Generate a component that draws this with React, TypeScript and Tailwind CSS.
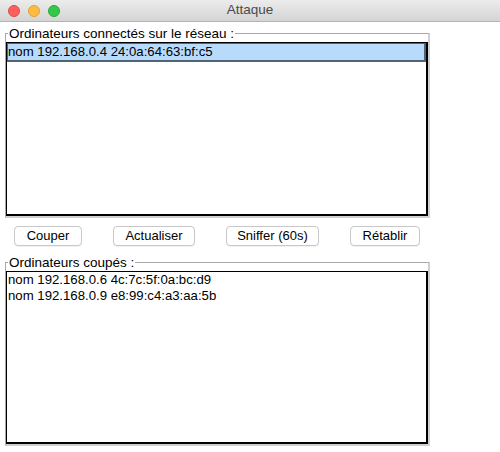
import React from "react";

const connected = ["nom 192.168.0.4 24:0a:64:63:bf:c5"];
const cut = ["nom 192.168.0.6 4c:7c:5f:0a:bc:d9", "nom 192.168.0.9 e8:99:c4:a3:aa:5b"];

const buttons = [
  { label: "Couper", w: "w-[68px]" },
  { label: "Actualiser", w: "w-[82px]" },
  { label: "Sniffer (60s)", w: "w-[93px]" },
  { label: "Rétablir", w: "w-[70px]" },
];

const TitleBar = () => (
  <div className="relative h-[22px] bg-gradient-to-b from-[#ececec] to-[#d4d4d4] border-b border-[#b4b4b4] flex items-center">
    <div className="flex items-center gap-[8px] pl-[8px]">
      <span className="w-[12px] h-[12px] rounded-full bg-[#fc605c] border border-[#de4b45]" />
      <span className="w-[12px] h-[12px] rounded-full bg-[#fdbc40] border border-[#dea236]" />
      <span className="w-[12px] h-[12px] rounded-full bg-[#34c84a] border border-[#27aa35]" />
    </div>
    <div className="absolute inset-0 flex items-center justify-center text-[13.5px] text-[#4a4a4a]">
      Attaque
    </div>
  </div>
);

const Group: React.FC<{ title: string; rows: string[]; height: string; selected?: number }> = ({
  title,
  rows,
  height,
  selected,
}) => (
  <fieldset className="ml-[5px] w-[425px] border-l border-t border-r-2 border-b-2 border-l-[#a9a9a9] border-t-[#a9a9a9] border-r-[#d0d0d0] border-b-[#d0d0d0] p-0 m-0">
    <legend className="ml-[2px] px-[1px] text-[13.5px] leading-[15px] text-black">{title}</legend>
    <div className={`${height} mt-[1px] bg-white border border-black border-r-2 border-b-2`}>
      {rows.map((r, i) => (
        <div
          key={i}
          className={
            i === selected
              ? "h-[19px] leading-[16px] bg-[#b8dbfb] border border-[#4f6578] border-r-2 border-b-2 text-[13.2px] text-black"
              : "h-[16px] leading-[16px] pl-[1px] text-[13.2px] text-black"
          }
        >
          {r}
        </div>
      ))}
    </div>
  </fieldset>
);

export default function App() {
  return (
    <div className="w-[500px] h-[452px] bg-white overflow-hidden font-['Liberation_Sans',Arial,sans-serif]">
      <TitleBar />
      <div className="pt-[4px]">
        <Group title="Ordinateurs connectés sur le réseau :" rows={connected} height="h-[174px]" selected={0} />
        <div className="flex gap-[31px] pl-[14px] pt-[8px]">
          {buttons.map((b) => (
            <button
              key={b.label}
              className={`${b.w} h-[20px] rounded-[4px] border border-[#c8c8c8] bg-white text-[13px] leading-[18px] text-black shadow-[0_1px_0_rgba(0,0,0,0.05)]`}
            >
              {b.label}
            </button>
          ))}
        </div>
        <div className="pt-[9px]">
          <Group title="Ordinateurs coupés :" rows={cut} height="h-[173px]" />
        </div>
      </div>
    </div>
  );
}
